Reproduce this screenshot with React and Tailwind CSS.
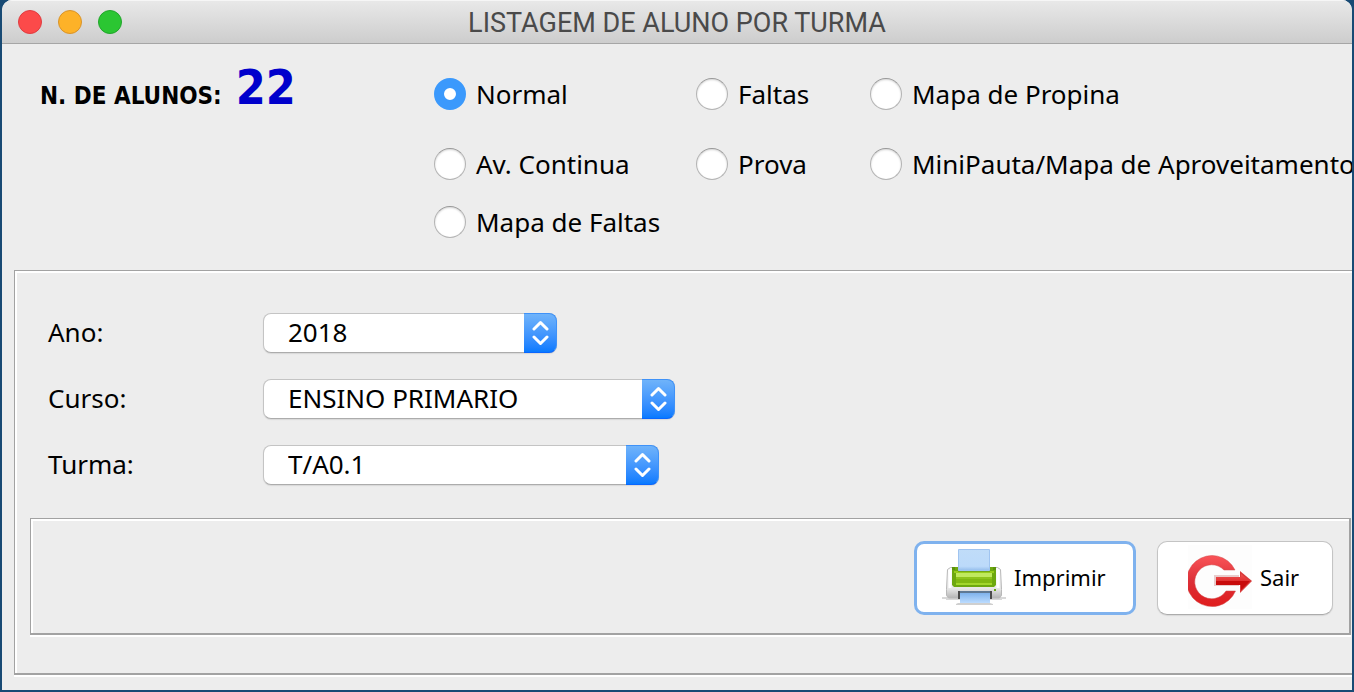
import React, { useState } from "react";

const modes = [
  "Normal",
  "Faltas",
  "Mapa de Propina",
  "Av. Continua",
  "Prova",
  "MiniPauta/Mapa de Aproveitamento",
  "Mapa de Faltas",
];

const fields = [
  { id: "ano", label: "Ano:", value: "2018", width: "w-[294px]" },
  { id: "curso", label: "Curso:", value: "ENSINO PRIMARIO", width: "w-[412px]" },
  { id: "turma", label: "Turma:", value: "T/A0.1", width: "w-[396px]" },
];

function PrinterIcon() {
  return (
    <svg width="64" height="64" viewBox="0 0 64 64" aria-hidden="true" className="shrink-0">
      <defs>
        <linearGradient id="pBody" x1="0" y1="0" x2="0" y2="1">
          <stop offset="0" stopColor="#fdfdfd" />
          <stop offset="0.7" stopColor="#e6e6e6" />
          <stop offset="1" stopColor="#b4b4b4" />
        </linearGradient>
        <linearGradient id="pPaper" x1="0" y1="0" x2="0" y2="1">
          <stop offset="0" stopColor="#c0dcf8" />
          <stop offset="0.8" stopColor="#bcdafa" />
          <stop offset="1" stopColor="#94bdec" />
        </linearGradient>
        <linearGradient id="pOut" x1="0" y1="0" x2="0" y2="1">
          <stop offset="0" stopColor="#7fb2ec" />
          <stop offset="1" stopColor="#bcdcff" />
        </linearGradient>
      </defs>
      <path d="M0 52h64v2H60v1H4v-1H0z" fill="#d8d8d8" />
      <path d="M16 58h32l3 1v1H14v-1z" fill="#cfcfcf" />
      <path
        d="M8.500 22.500h47l3 2 1 20v6l-2 2.500H6.500l-2-2.500v-6l1-20z"
        fill="url(#pBody)"
        stroke="#b8b8b8"
      />
      <path d="M8 25v18M56 25v18" stroke="#ffffff" strokeWidth="3" />
      <path d="M10 22h44v18l-2 2H12l-2-2z" fill="#6da80f" />
      <path d="M10 22h3v3h-3zM51 22h3v3h-3z" fill="#5b930a" />
      <path d="M12 26h40v2H12z" fill="#98cc1b" />
      <path d="M14 28h36v4H14z" fill="#c0e95e" />
      <path d="M14 32h36v2H14z" fill="#8fc41c" />
      <path d="M14 34h36v4H14z" fill="#80b811" />
      <path d="M14 38h36v2H14z" fill="#a2d62c" />
      <path d="M16.500 4.500h31v21h-31z" fill="url(#pPaper)" stroke="#a0c4f0" />
      <path d="M16 26h32v1H16z" fill="#74a717" />
      <path d="M52 44h2v2h-2z" fill="#68a414" />
      <path d="M16 46h34v8H16z" fill="#4b4b4b" />
      <path d="M18 46h30v2H18z" fill="#5e7894" />
      <path d="M18 48h30v10H18z" fill="url(#pOut)" />
    </svg>
  );
}

function ExitIcon() {
  return (
    <svg width="64" height="64" viewBox="0 0 64 64" aria-hidden="true" className="shrink-0">
      <defs>
        <linearGradient id="eRing" x1="0" y1="0" x2="0" y2="1">
          <stop offset="0" stopColor="#fa5458" />
          <stop offset="0.5" stopColor="#dc3038" />
          <stop offset="1" stopColor="#e01c1c" />
        </linearGradient>
        <linearGradient id="eArrow" x1="0" y1="0" x2="0" y2="1">
          <stop offset="0" stopColor="#f05050" />
          <stop offset="1" stopColor="#cc0c0c" />
        </linearGradient>
      </defs>
      <rect width="64" height="64" fill="#fdfdfd" />
      <path
        d="M47 25A25.500 25.500 0 1 0 47.500 46H38A17 17 0 1 1 36 25z"
        fill="url(#eRing)"
        stroke="#d04848"
        strokeWidth="0.500"
      />
      <path d="M26 30H51V41H26z" fill="#e8cccc" />
      <path d="M52 26L64 36 52 48z" fill="#d83a3a" />
      <path d="M28 32H53V29L62 36 53 45V40H28z" fill="url(#eArrow)" />
      <path d="M28 36h34l-9 9v-5H28z" fill="#c80c0c" />
    </svg>
  );
}

function Radio({ label, checked, onChange }) {
  return (
    <label className="flex h-8 items-center gap-[10px] whitespace-nowrap">
      <input
        type="radio"
        name="modo"
        checked={checked}
        onChange={onChange}
        className="size-8 shrink-0 appearance-none rounded-full border border-[#b4b4b4] border-t-[#989898] bg-white shadow-[inset_0_1px_2px_#d4d4d4] checked:border-[10px] checked:border-[#3b99fc] checked:shadow-none"
      />
      {label}
    </label>
  );
}

function Field({ id, label, value, width }) {
  return (
    <>
      <label htmlFor={id} className="pb-[2px]">{label}</label>
      <div className={`relative h-10 ${width}`}>
        <select
          id={id}
          className="h-full w-full appearance-none rounded-lg border border-[#c4c4c4] border-b-[#acacac] bg-white pb-[2px] pl-6 pr-10 leading-9 shadow-[0_1px_1px_#d8d8d8]"
        >
          <option>{value}</option>
        </select>
        <span className="pointer-events-none absolute inset-y-0 right-0 flex w-[33px] items-center justify-center rounded-r-lg border border-l-0 border-[#3f92f8] border-b-[#0a66ff] bg-linear-to-b from-[#6fb3fa] to-[#067aff]">
          <svg
            width="18"
            height="28"
            viewBox="0 0 18 28"
            fill="none"
            stroke="white"
            strokeWidth="3"
            strokeLinecap="round"
            strokeLinejoin="round"
            aria-hidden="true"
          >
            <path d="M3 10L9.500 3.500 16 10M3 18l6.500 6.500L16 18" />
          </svg>
        </span>
      </div>
    </>
  );
}

export default function App() {
  const [mode, setMode] = useState("Normal");
  return (
    <div className="flex min-h-screen flex-col overflow-hidden bg-[#184a74] px-[2px] pb-[2px] font-['Noto_Sans',sans-serif] text-[26px] leading-8 text-black">
      <main className="flex flex-1 flex-col overflow-hidden rounded-t-[10px] bg-[#ededed]">
        <header className="grid h-11 shrink-0 grid-cols-[1fr_auto_1fr] items-center border-b border-[#a6a6a6] bg-linear-to-b from-[#e9e9e9] to-[#cdcdcd] px-4 shadow-[inset_0_1px_0_#f6f6f6]">
          <div className="flex gap-4">
            <button aria-label="Fechar" className="size-6 rounded-full border border-[#df3c40] bg-[#fc4a4a]" />
            <button aria-label="Minimizar" className="size-6 rounded-full border border-[#d8932a] bg-[#fdb228]" />
            <button aria-label="Ampliar" className="size-6 rounded-full border border-[#22a52c] bg-[#2bc632]" />
          </div>
          <h1 className="pt-[2px] font-['Roboto',sans-serif] text-[27px] text-[#4a4a4a]">
            LISTAGEM DE ALUNO POR TURMA
          </h1>
        </header>

        <section className="flex h-[226px] shrink-0 pl-[38px]">
          <p className="flex w-[394px] shrink-0 items-baseline gap-[14px] pt-[19px] font-['DejaVu_Sans_Condensed','DejaVu_Sans',sans-serif] font-bold">
            <span className="text-[24px]">N. DE ALUNOS:</span>
            <output className="text-[48px] leading-[48px] text-[#0000cc]">22</output>
          </p>
          <fieldset className="grid grid-cols-[262px_174px_auto] grid-rows-[70px_58px_32px] pt-[34px]">
            {modes.map((m) => (
              <Radio key={m} label={m} checked={mode === m} onChange={() => setMode(m)} />
            ))}
          </fieldset>
        </section>

        <section className="ml-3 border-b-2 border-l border-t border-[#a2a2a2] pb-[38px] pl-[15px] pr-px pt-[42px] shadow-[inset_2px_2px_0_white,0_2px_0_white]">
          <div className="grid grid-cols-[215px_auto] items-center gap-y-[26px] pl-[18px]">
            {fields.map((f) => (
              <Field key={f.id} {...f} />
            ))}
          </div>
          <div className="mt-[33px] flex justify-end gap-[21px] border-b-2 border-l border-r-2 border-t border-[#a2a2a2] pb-[18px] pr-4 pt-[22px] text-[22px] shadow-[inset_2px_2px_0_white,0_2px_0_white]">
            <button className="flex h-[74px] w-[222px] items-center gap-2 rounded-[10px] border-[3px] border-[#7fb2ee] bg-white pb-[3px] pl-[25px]">
              <PrinterIcon />
              Imprimir
            </button>
            <button className="flex h-[74px] w-44 items-center gap-2 rounded-[10px] border border-[#c4c4c4] border-b-[#acacac] bg-white pb-[3px] pl-[30px] shadow-[0_1px_1px_#d8d8d8]">
              <ExitIcon />
              Sair
            </button>
          </div>
        </section>
      </main>
    </div>
  );
}
